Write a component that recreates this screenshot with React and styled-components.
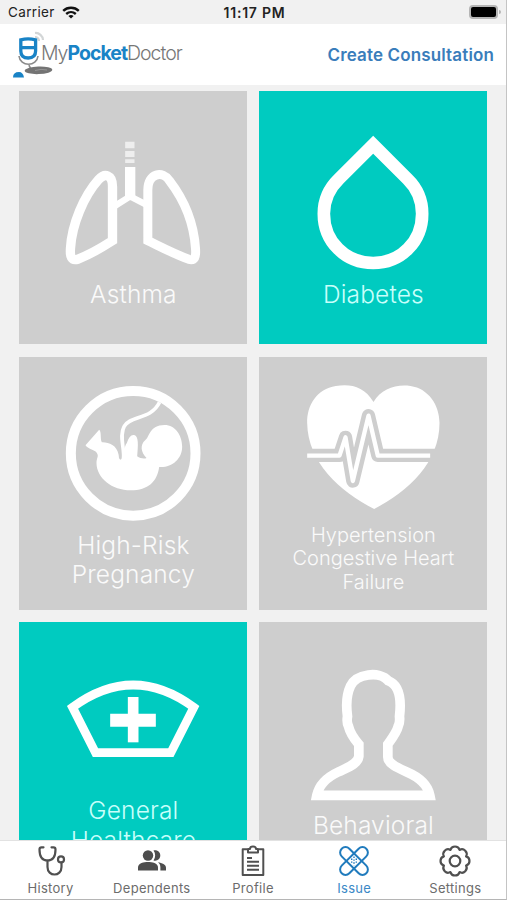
import React, { useState } from 'react';
import styled, { createGlobalStyle } from 'styled-components';

const LungsIcon = () => (
  <svg viewBox="46.5 12 408 408" fill="none" stroke="#fff" strokeWidth="28">
    <path d="M189 332 V170 C189 134 166 128 147 149 C103 198 67 283 63 355 C61 382 66 392 84 388 C120 374 155 354 189 332 Z" />
    <path d="M295 332 V180 C295 128 340 122 360 152 C403 208 433 280 438 355 C440 382 436 392 418 388 C378 374 340 354 295 332 Z" strokeWidth="27" />
    <path d="M242 111 V200" strokeWidth="31" />
    <path d="M196 228 L242 199 L290 224" strokeWidth="19" />
    <path d="M241 35 V55 M241 63 V81 M241 88 V99" strokeWidth="28" opacity="0.65" />
  </svg>
);

const DropIcon = () => (
  <svg viewBox="46.5 42 408 408" fill="none" stroke="#fff" strokeWidth="38">
    <path d="M251 74 L148 177 C118 206 103 244 103 281 C103 365 168 429 251 429 C334 429 398 365 398 281 C398 244 384 206 354 177 Z" />
  </svg>
);

const PregnancyIcon = () => (
  <svg viewBox="46.5 30 408 408" fill="none" stroke="#fff">
    <circle cx="251" cy="235" r="187" strokeWidth="30" />
    <path d="M222 252 C226 220 208 184 224 154 C240 122 306 134 330 82" strokeWidth="11" />
    <path
      fill="#fff"
      stroke="none"
      d="M108 211 L149 164 C157 172 151 188 157 202 C176 201 202 210 207 238 C209 247 207 251 213 254 C222 254 222 216 232 204 C238 186 245 178 254 180 C268 184 266 210 263 244 C272 251 286 252 291 249 C274 232 271 210 287 196 C301 186 299 150 345 150 C378 150 398 182 398 215 C398 252 366 279 329 276 C323 320 296 346 244 346 C187 346 141 309 141 264 C141 248 149 244 142 234 C137 224 117 224 108 211 Z"
    />
  </svg>
);

const HeartIcon = () => (
  <svg viewBox="76.5 15 408 408" fill="none" stroke="#fff" strokeLinejoin="round">
    <path
      fill="#fff"
      stroke="none"
      d="M282 81 C254 34 213 26 169 33 C112 42 82 90 83 144 C85 262 179 348 284 402 C388 348 480 262 480 144 C480 90 447 41 393 33 C351 27 306 40 282 81 Z"
    />
    <path d="M66 241 H180 L198 187 L220 318 L267 122 L295 241 H490" stroke="#cecece" strokeWidth="40" />
    <path d="M83 242 H180 L198 187 L220 318 L267 122 L295 242 H452" strokeWidth="13" />
  </svg>
);

const NurseCapIcon = () => (
  <svg viewBox="46.5 -27 408 408" fill="none" stroke="#fff" strokeWidth="26">
    <path d="M69 142 Q251 8 433 142 L364 278 H138 Z" />
    <path d="M251 111 V247" strokeWidth="32" />
    <path d="M182 181 H319" strokeWidth="39" />
  </svg>
);

const PersonIcon = () => (
  <svg viewBox="46.5 39 408 408" fill="none" stroke="#fff" strokeWidth="29">
    <path d="M82 421 H421 C414 386 387 366 352 351 C322 338 295 326 295 306 V268 C310 247 322 231 326 214 C332 203 331 196 330 184 C334 150 337 92 296 77 C271 47 200 56 183 93 C169 123 170 155 174 184 C172 196 171 203 177 214 C181 231 191 248 208 268 V304 C205 328 174 337 146 351 C112 367 89 387 82 421 Z" />
  </svg>
);

const StethoscopeIcon = () => (
  <svg viewBox="0 0 32 32" fill="none" stroke="#505050" strokeWidth="2.2" strokeLinecap="round">
    <path d="M8.5 2.3 H6.5 Q4.5 2.3 4.5 4.5 C4.5 11 7 15.5 12.5 15.5 C18 15.5 20.5 11 20.5 4.5 Q20.5 2.3 18.5 2.3 H16.5" />
    <path d="M12.5 15.5 V22 C12.5 32 26.5 32 26.5 22 V17.5" />
    <circle cx="26" cy="14.4" r="3" />
  </svg>
);

const PeopleIcon = () => (
  <svg viewBox="0 0 32 32" fill="#4d4d4d">
    <circle cx="12" cy="10.5" r="5.2" />
    <path d="M2 25.5 V22.5 C2 18 8 17 12 17 C16 17 22 18 22 22.5 V25.5 Z" />
    <path d="M17.5 5.6 C21 4.5 24.3 7 24.3 10.5 C24.3 14 21 16.5 17.5 15.4 C19.7 12.5 19.7 8.5 17.5 5.6 Z" />
    <path d="M22 17.3 C26 18 30 19.5 30 22.8 V25.5 H24.4 V22.5 C24.4 20 23.5 18.5 22 17.3 Z" />
  </svg>
);

const ClipboardIcon = () => (
  <svg viewBox="0 0 32 32" fill="none" stroke="#505050" strokeWidth="2" strokeLinejoin="round">
    <path d="M10.5 4.2 H5.7 V30 H26.3 V4.2 H21.5" />
    <path d="M11 7.5 V4 H13 C13 0.8 19 0.8 19 4 H21 V7.5 Z" />
    <path d="M10 13 H15 M10 16.7 H22 M10 20.7 H22 M10 24.7 H22" />
  </svg>
);

const BandagesIcon = () => (
  <svg viewBox="0 0 32 32" fill="none" stroke="#207bbd" strokeWidth="2">
    <rect x="-1.4" y="10.6" width="34.8" height="10.8" rx="5.4" transform="rotate(45 16 16)" />
    <rect x="-1.4" y="10.6" width="34.8" height="10.8" rx="5.4" transform="rotate(-45 16 16)" />
    <path d="M16 11.5 V20.5 M13.7 13.5 V18.5 M18.3 13.5 V18.5" strokeWidth="1.4" strokeDasharray="1.4 1.5" />
  </svg>
);

const petals = Array.from({ length: 8 }, (_, i) => {
  const point = deg => {
    const a = (deg * Math.PI) / 180;
    return `${(16 + 12 * Math.cos(a)).toFixed(2)} ${(16 + 12 * Math.sin(a)).toFixed(2)}`;
  };
  return `${i === 0 ? `M${point(-22.5)}` : ''} A4.8 4.8 0 0 1 ${point(i * 45 + 22.5)}`;
}).join(' ');

const GearIcon = () => (
  <svg viewBox="0 0 32 32" fill="none" stroke="#505050" strokeWidth="2.2" strokeLinejoin="round">
    <path d={`${petals} Z`} />
    <circle cx="16" cy="16" r="5.3" />
  </svg>
);

const WifiIcon = () => (
  <svg width="18" height="13" viewBox="0 0 18 13" fill="none" stroke="#111" strokeWidth="2.4">
    <path d="M1.2 4.8 C5.5 0.7 12.5 0.7 16.8 4.8" />
    <path d="M4.2 8 C7 5.5 11 5.5 13.8 8" />
    <path d="M9 12.6 L6.4 10 C7.8 8.8 10.2 8.8 11.6 10 Z" fill="#111" stroke="none" />
  </svg>
);

const LogoMark = () => (
  <svg width="44" height="50" viewBox="0 0 44 50" fill="none">
    <path d="M22 3 C26 2.5 30 6 30 10 M22 7 C24 7 26 8.5 26 11" stroke="#d3d6d7" strokeWidth="2.2" />
    <path d="M6 26 C7 37 24 37 25 26 M16 34 C16 38 19 40 24 40" stroke="#8b8b8b" strokeWidth="1.6" />
    <ellipse cx="25.5" cy="40.3" rx="13.8" ry="3.8" fill="#747474" transform="rotate(-2 25.5 40.3)" />
    <path d="M22 40.5 Q28 38.5 34 40" stroke="#969696" />
    <path d="M7.8 9.8 Q15 8 22.6 9.8 V21 Q22.6 28 15.2 28 Q7.8 28 7.8 21 Z M8 17.6 H22.6" stroke="#1983c6" strokeWidth="3.3" />
    <path d="M0 47.5 Q0 42 6 42 Q10 42 11 47.5 Z" fill="#1983c6" />
  </svg>
);

const issues = [
  { id: 'asthma', label: ['Asthma'], icon: LungsIcon, top: 43, gap: 10 },
  { id: 'diabetes', label: ['Diabetes'], icon: DropIcon, top: 43, gap: 10, selected: true },
  { id: 'pregnancy', label: ['High-Risk', 'Pregnancy'], icon: PregnancyIcon, top: 28, gap: 10 },
  { id: 'hypertension', label: ['Hypertension', 'Congestive Heart', 'Failure'], icon: HeartIcon, top: 23, gap: 8, small: true },
  { id: 'general', label: ['General', 'Healthcare'], icon: NurseCapIcon, top: 29, gap: 9, selected: true },
  { id: 'behavioral', label: ['Behavioral'], icon: PersonIcon, top: 46, gap: 7 },
];

const tabs = [
  { label: 'History', icon: StethoscopeIcon },
  { label: 'Dependents', icon: PeopleIcon },
  { label: 'Profile', icon: ClipboardIcon },
  { label: 'Issue', icon: BandagesIcon },
  { label: 'Settings', icon: GearIcon },
];

const App = () => {
  const [activeTab, setActiveTab] = useState('Issue');

  return (
    <>
      <GlobalStyle />
      <Screen>
        <StatusBar>
          <Carrier>
            Carrier
            <WifiIcon />
          </Carrier>
          <Clock>11:17 PM</Clock>
          <BatterySlot>
            <Battery />
            <BatteryTip />
          </BatterySlot>
        </StatusBar>

        <Header>
          <Logo>
            <LogoMark />
            <LogoText>
              My<b>Pocket</b>Doctor
            </LogoText>
          </Logo>
          <CreateButton>Create Consultation</CreateButton>
        </Header>

        <Content>
          <IssueGrid>
            {issues.map(({ id, label, icon: Icon, top, gap, selected, small }) => (
              <IssueCard key={id} $top={top} $selected={selected}>
                <IconBox>
                  <Icon />
                </IconBox>
                <IssueLabel $gap={gap} $small={small} $selected={selected}>
                  {label.map(line => (
                    <span key={line}>{line}</span>
                  ))}
                </IssueLabel>
              </IssueCard>
            ))}
          </IssueGrid>
        </Content>

        <TabBar>
          {tabs.map(({ label, icon: Icon }) => (
            <TabItem
              key={label}
              $active={activeTab === label}
              onClick={() => setActiveTab(label)}
            >
              <Icon />
              {label}
            </TabItem>
          ))}
        </TabBar>
      </Screen>
    </>
  );
};

const GlobalStyle = createGlobalStyle`
  * {
    box-sizing: border-box;
  }

  body {
    margin: 0;
    font-family: Inter, 'Liberation Sans', sans-serif;
    overflow: hidden;
  }

  button {
    font-family: inherit;
    background: none;
    border: none;
    padding: 0;
    cursor: pointer;
  }
`;

const Screen = styled.div`
  width: 507px;
  height: 900px;
  display: flex;
  flex-direction: column;
  background: #f1f1f1;
  border-right: 1px solid #c4c4c4;
  border-bottom: 1px solid #b5b5b5;
`;

const StatusBar = styled.div`
  height: 24px;
  flex-shrink: 0;
  display: grid;
  grid-template-columns: 1fr auto 1fr;
  align-items: center;
  padding: 0 5px 0 8px;
  color: #222;
`;

const Carrier = styled.div`
  display: flex;
  align-items: center;
  gap: 7px;
  font-size: 13.5px;
  letter-spacing: 0.35px;
`;

const Clock = styled.div`
  font-size: 14px;
  font-weight: 600;
  letter-spacing: 0.75px;
`;

const BatterySlot = styled.div`
  display: flex;
  align-items: center;
  justify-content: flex-end;
  gap: 1px;
`;

const Battery = styled.div`
  width: 29px;
  height: 14px;
  border: 2px solid #b5b5b5;
  border-radius: 4px;
  background: #000;
`;

const BatteryTip = styled.div`
  width: 2px;
  height: 4px;
  border-radius: 0 2px 2px 0;
  background: #b5b5b5;
`;

const Header = styled.header`
  height: 61px;
  flex-shrink: 0;
  display: flex;
  align-items: center;
  justify-content: space-between;
  padding: 0 12px 0 13px;
  background: #fff;
`;

const Logo = styled.div`
  display: flex;
  align-items: center;
`;

const LogoText = styled.div`
  margin: 0 0 4px -16px;
  font-size: 19.5px;
  font-weight: 300;
  letter-spacing: -1px;
  color: #777;

  b {
    font-weight: 700;
    color: #1983c6;
  }
`;

const CreateButton = styled.button`
  font-size: 17px;
  font-weight: 600;
  letter-spacing: 0.14px;
  color: #3a7dbb;
`;

const Content = styled.main`
  flex: 1;
  min-height: 0;
  overflow: hidden;
  padding: 6px 19px 0 19.4px;
`;

const IssueGrid = styled.div`
  display: grid;
  grid-template-columns: 228px 228px;
  grid-auto-rows: 253px;
  gap: 12.5px 12px;
`;

const IssueCard = styled.div`
  display: flex;
  flex-direction: column;
  align-items: center;
  padding-top: ${props => props.$top}px;
  background: ${props => (props.$selected ? '#00cbc0' : '#cecece')};
`;

const IconBox = styled.div`
  width: 136px;
  height: 136px;
  flex-shrink: 0;

  svg {
    display: block;
    width: 100%;
    height: 100%;
  }
`;

const IssueLabel = styled.div`
  display: flex;
  flex-direction: column;
  align-items: center;
  margin-top: ${props => props.$gap}px;
  font-weight: 350;
  white-space: nowrap;
  font-size: ${props => (props.$small ? 20 : 24.5)}px;
  line-height: ${props => (props.$small ? 23.6 : 29.5)}px;
  letter-spacing: ${props => (props.$small ? 0 : 0.15)}px;
  color: ${props => (props.$selected ? '#c8fffb' : '#fafafa')};
`;

const TabBar = styled.nav`
  height: 59px;
  flex-shrink: 0;
  display: grid;
  grid-template-columns: repeat(5, 1fr);
  background: #fff;
  border-top: 1px solid #e2e2e2;
`;

const TabItem = styled.button`
  display: flex;
  flex-direction: column;
  align-items: center;
  padding-top: 4px;
  font-size: 13px;
  line-height: 20px;
  letter-spacing: 0.3px;
  color: ${props => (props.$active ? '#3b88c6' : '#6c6c6c')};

  svg {
    width: 32px;
    height: 32px;
    margin-bottom: 1px;
  }
`;

export default App;
